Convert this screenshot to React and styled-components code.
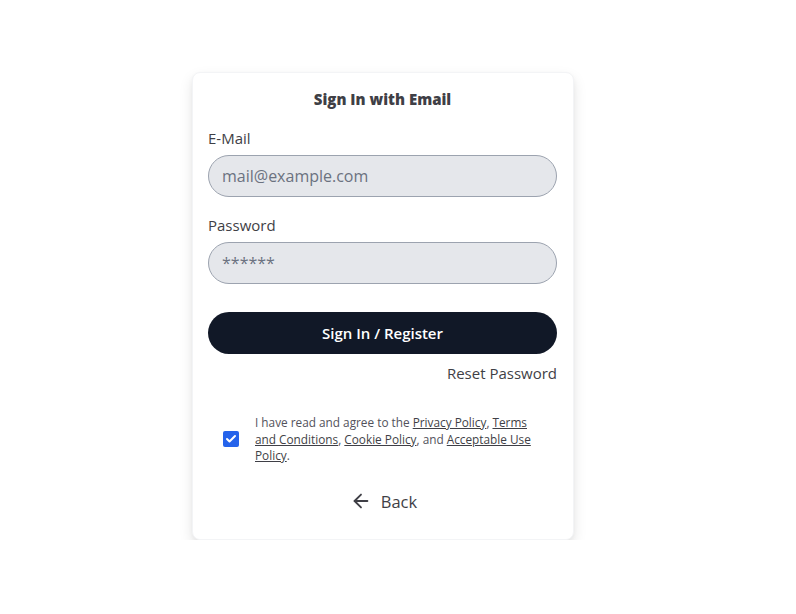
import styled, { createGlobalStyle } from 'styled-components';
import { ArrowLeft, Check } from 'lucide-react';

const Global = createGlobalStyle`
  body {
    margin: 0;
    background: #fff;
    font-family: "Open Sans", "Noto Sans", sans-serif;
    color: #374151;
  }
`;

const Page = styled.div`
  display: flex;
  align-items: flex-start;
  padding: 72px 0 0 192px;
`;

const Card = styled.div`
  width: 382px;
  box-sizing: border-box;
  padding: 16px 16px 25px 15px;
  background: #fff;
  border-radius: 8px;
  border: 1px solid #f3f4f6;
  box-shadow: 0 6px 14px rgba(0, 0, 0, 0.1), 0 2px 4px rgba(0, 0, 0, 0.04);
  display: flex;
  flex-direction: column;
`;

const Title = styled.h1`
  margin: 0 0 19px;
  font-size: 15px;
  font-weight: 800;
  text-align: center;
  color: #3f3f46;
  line-height: 20px;
`;

const Label = styled.label`
  font-size: 15px;
  line-height: 20px;
  color: #3f3f46;
  margin-bottom: 7px;
`;

const Input = styled.input`
  height: 42px;
  box-sizing: border-box;
  width: 100%;
  border: 1px solid #9ca3af;
  border-radius: 21px;
  background: #e5e7eb;
  padding: 0 13px;
  font-family: inherit;
  font-size: 16px;
  color: #4b5563;
  margin-bottom: ${p => p.$gap || '18px'};
  outline: none;
  &::placeholder {
    color: #6b7280;
  }
`;

const Button = styled.button`
  height: 42px;
  width: 100%;
  border: none;
  border-radius: 21px;
  background: #111827;
  color: #fff;
  font-family: inherit;
  font-size: 15px;
  font-weight: 600;
  cursor: pointer;
`;

const Reset = styled.a`
  align-self: flex-end;
  margin-top: 9px;
  font-size: 15px;
  line-height: 20px;
  color: #3f3f46;
  cursor: pointer;
`;

const Agree = styled.div`
  display: flex;
  align-items: center;
  gap: 16px;
  margin: 31px 0 0 15px;
  padding-right: 20px;
`;

const Box = styled.span`
  flex: none;
  width: 16px;
  height: 16px;
  border-radius: 2px;
  background: #2563eb;
  display: flex;
  align-items: center;
  justify-content: center;
  color: #fff;
`;

const AgreeText = styled.p`
  margin: 0;
  font-size: 11.8px;
  line-height: 16.5px;
  color: #52525b;
  a {
    color: #3f3f46;
    text-decoration: underline;
  }
`;

const Back = styled.button`
  align-self: center;
  margin-top: 25px;
  display: flex;
  align-items: center;
  gap: 9px;
  background: none;
  border: none;
  font-family: inherit;
  font-size: 16.5px;
  color: #3f3f46;
  cursor: pointer;
  margin-right: -2px;
`;

export default function App() {
  return (
    <>
      <Global />
      <Page>
        <Card>
          <Title>Sign In with Email</Title>
          <Label>E-Mail</Label>
          <Input placeholder="mail@example.com" />
          <Label>Password</Label>
          <Input type="password" placeholder="******" $gap="28px" />
          <Button>Sign In / Register</Button>
          <Reset>Reset Password</Reset>
          <Agree>
            <Box>
              <Check size={12} strokeWidth={4} />
            </Box>
            <AgreeText>
              I have read and agree to the <a>Privacy Policy</a>, <a>Terms and Conditions</a>,{' '}
              <a>Cookie Policy</a>, and <a>Acceptable Use Policy</a>.
            </AgreeText>
          </Agree>
          <Back>
            <ArrowLeft size={22} strokeWidth={2} />
            Back
          </Back>
        </Card>
      </Page>
    </>
  );
}
